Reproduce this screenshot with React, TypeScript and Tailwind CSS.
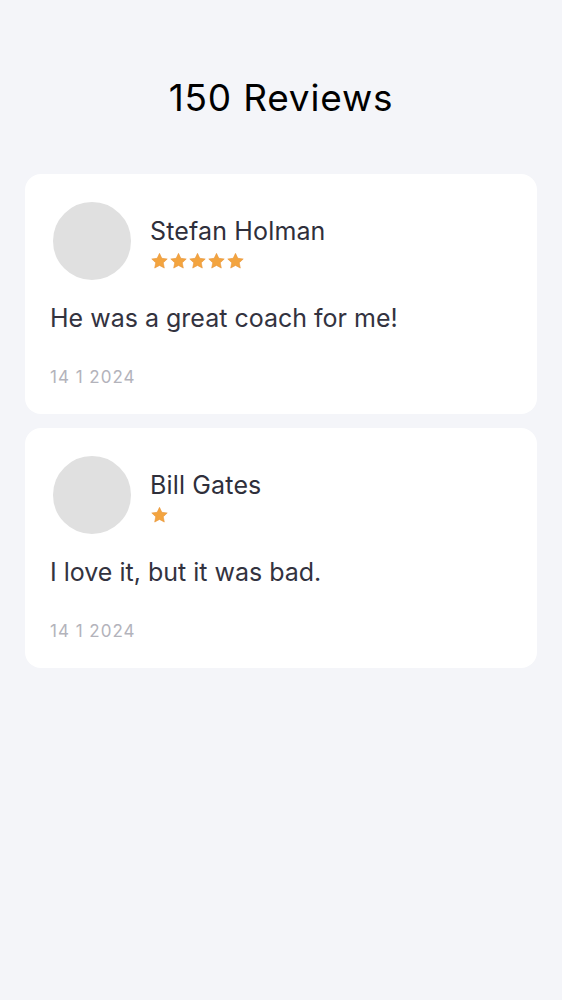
const reviews = [
  { name: 'Stefan Holman', rating: 5, text: 'He was a great coach for me!', date: '14 1 2024' },
  { name: 'Bill Gates', rating: 1, text: 'I love it, but it was bad.', date: '14 1 2024' },
]

function Star() {
  return (
    <svg width="19" height="18" viewBox="0 0 24 24" className="shrink-0">
      <path
        d="M12 1.8l3.1 6.6 7.2.9-5.3 5 1.4 7.1L12 17.9l-6.4 3.5 1.4-7.1-5.3-5 7.2-.9z"
        fill="#f3a43f"
        stroke="#e8963a"
        strokeWidth="0.8"
        strokeLinejoin="round"
      />
    </svg>
  )
}

export default function App() {
  return (
    <div
      className="min-h-[1000px] bg-[#f4f5f9] px-[25px] pt-[74px]"
      style={{ fontFamily: 'Inter, "Noto Sans", sans-serif' }}
    >
      <h1 className="text-center text-[37px] leading-[48px] tracking-[0.8px] text-black">150 Reviews</h1>

      <div className="mt-[52px] flex flex-col gap-[14px]">
        {reviews.map((r, i) => (
          <div key={i} className="rounded-[16px] bg-white px-[25px] pt-[25px] pb-[25px]">
            <div className="flex items-center gap-4">
              <div className="h-[84px] w-[84px] shrink-0 rounded-full border-[3px] border-white bg-[#e0e0e0]" />
              <div className="flex flex-col pt-[4px]">
                <span className="text-[25px] leading-[30px] tracking-[0.15px] text-[#2f2f3b]">{r.name}</span>
                <div className="mt-[6px] flex">
                  {Array.from({ length: r.rating }).map((_, j) => (
                    <Star key={j} />
                  ))}
                </div>
              </div>
            </div>
            <p className="mt-[20px] text-[25px] leading-[30px] text-[#33333f]">{r.text}</p>
            <p className="mt-[32px] text-[17px] leading-[24px] tracking-[1px] text-[#b3b3bb]">{r.date}</p>
          </div>
        ))}
      </div>
    </div>
  )
}
